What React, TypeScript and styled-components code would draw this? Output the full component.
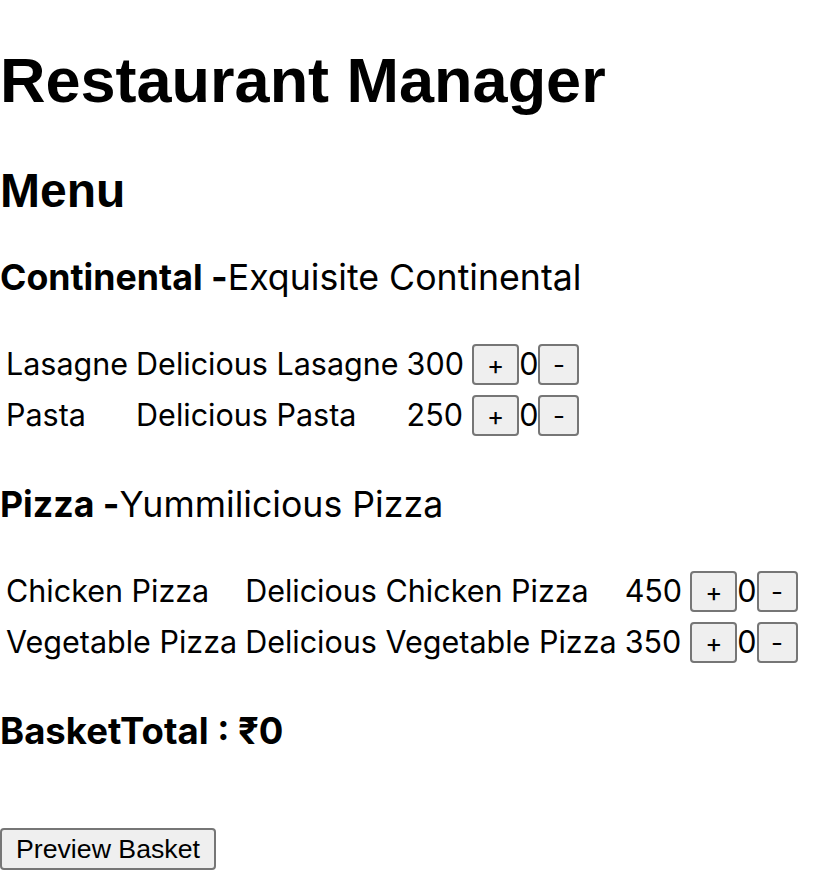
import styled, { createGlobalStyle } from "styled-components";

const GlobalStyle = createGlobalStyle`
  body {
    margin: 0;
    background: #fff;
    color: #000;
    font-family: "Liberation Sans", Arial, sans-serif;
  }
`;

const Title = styled.h1`
  font-family: "Liberation Sans", Arial, sans-serif;
  font-size: 63px;
  font-weight: 700;
  margin: 44px 0 0;
`;

const SectionTitle = styled.h2`
  font-family: "Liberation Sans", Arial, sans-serif;
  font-size: 48px;
  font-weight: 700;
  margin: 47px 0 0;
`;

const CategoryBlock = styled.section`
  padding-bottom: 3px;
`;

const CategoryHeading = styled.h3`
  font-family: Inter, "Noto Sans", sans-serif;
  font-size: 35.7px;
  font-weight: 400;
  margin: 37px 0 0;
`;

const CategoryName = styled.span`
  font-weight: 700;
`;

const MenuTable = styled.table`
  font-family: Inter, "Noto Sans", sans-serif;
  font-size: 30.5px;
  border-spacing: 4px;
  margin-top: 37px;
`;

const Cell = styled.td`
  padding: 2px;
  height: 43px;
  white-space: nowrap;
`;

const QtyButton = styled.button<{ $wide?: boolean }>`
  font-family: Inter, "Noto Sans", sans-serif;
  font-size: 26px;
  height: 41px;
  min-width: 41px;
  padding: 0 ${(p) => (p.$wide ? 13 : 12)}px;
  background: #efefef;
  border: 2px solid #767676;
  border-radius: 4px;
  color: #000;
  vertical-align: middle;
`;

const Count = styled.span`
  vertical-align: middle;
`;

const Total = styled.h3`
  font-family: Inter, "Noto Sans", sans-serif;
  font-size: 36.5px;
  font-weight: 700;
  margin: 37px 0 0;
`;

const PreviewButton = styled.button`
  font-family: "Liberation Sans", Arial, sans-serif;
  font-size: 26.7px;
  height: 42px;
  padding: 0 14px;
  margin-top: 75px;
  background: #efefef;
  border: 2px solid #767676;
  border-radius: 4px;
  color: #000;
`;

type Item = { name: string; description: string; price: number };
type Category = { name: string; description: string; items: Item[] };

const menu: Category[] = [
  {
    name: "Continental",
    description: "Exquisite Continental",
    items: [
      { name: "Lasagne", description: "Delicious Lasagne", price: 300 },
      { name: "Pasta", description: "Delicious Pasta", price: 250 },
    ],
  },
  {
    name: "Pizza",
    description: "Yummilicious Pizza",
    items: [
      { name: "Chicken Pizza", description: "Delicious Chicken Pizza", price: 450 },
      { name: "Vegetable Pizza", description: "Delicious Vegetable Pizza", price: 350 },
    ],
  },
];

export default function App() {
  return (
    <>
      <GlobalStyle />
      <Title>Restaurant Manager</Title>
      <SectionTitle>Menu</SectionTitle>
      {menu.map((category) => (
        <CategoryBlock key={category.name}>
          <CategoryHeading>
            <CategoryName>{category.name} -</CategoryName>
            {category.description}
          </CategoryHeading>
          <MenuTable>
            <tbody>
              {category.items.map((item) => (
                <tr key={item.name}>
                  <Cell>{item.name}</Cell>
                  <Cell>{item.description}</Cell>
                  <Cell>{item.price}</Cell>
                  <Cell>
                    <QtyButton $wide>+</QtyButton>
                    <Count>0</Count>
                    <QtyButton>-</QtyButton>
                  </Cell>
                </tr>
              ))}
            </tbody>
          </MenuTable>
        </CategoryBlock>
      ))}
      <Total>BasketTotal : ₹0</Total>
      <PreviewButton>Preview Basket</PreviewButton>
    </>
  );
}
